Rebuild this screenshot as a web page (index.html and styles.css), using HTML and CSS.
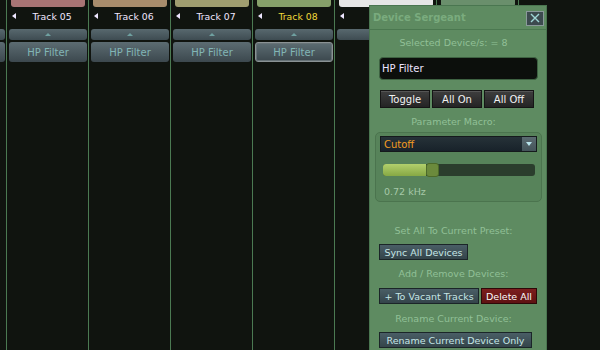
FILE: index.html
```html
<!DOCTYPE html>
<html>
<head>
<meta charset="utf-8">
<link rel="stylesheet" href="styles.css">
</head>
<body>
<div class="mixer">
  <div class="strip">
    <div class="colorbar none"></div>
    <div class="name"><span class="larrow"></span><span class="tname"></span></div>
    <div class="fold"><span class="uarrow"></span></div>
    <div class="dev"></div>
  </div>
  <div class="strip">
    <div class="colorbar c5"></div>
    <div class="name"><span class="larrow"></span><span class="tname">Track 05</span></div>
    <div class="fold"><span class="uarrow"></span></div>
    <div class="dev">HP Filter</div>
  </div>
  <div class="strip">
    <div class="colorbar c6"></div>
    <div class="name"><span class="larrow"></span><span class="tname">Track 06</span></div>
    <div class="fold"><span class="uarrow"></span></div>
    <div class="dev">HP Filter</div>
  </div>
  <div class="strip">
    <div class="colorbar c7"></div>
    <div class="name"><span class="larrow"></span><span class="tname">Track 07</span></div>
    <div class="fold"><span class="uarrow"></span></div>
    <div class="dev">HP Filter</div>
  </div>
  <div class="strip">
    <div class="colorbar c8"></div>
    <div class="name"><span class="larrow"></span><span class="tname sel">Track 08</span></div>
    <div class="fold"><span class="uarrow"></span></div>
    <div class="dev active">HP Filter</div>
  </div>
  <div class="strip wide">
    <div class="colorbar c9"></div>
    <div class="name"><span class="larrow"></span><span class="tname"></span></div>
    <div class="fold"><span class="uarrow"></span></div>
  </div>
  <div class="strip">
    <div class="colorbar c10"></div>
  </div>
</div>

<div class="panel">
  <div class="titlebar">
    <span class="title">Device Sergeant</span>
    <span class="close"><svg width="12" height="12" viewBox="0 0 12 12"><path d="M2 2 L10 10 M10 2 L2 10" stroke="#9fd6d6" stroke-width="1.4" fill="none"/></svg></span>
  </div>
  <div class="body">
    <div class="label l1">Selected Device/s: = 8</div>
    <div class="input">HP Filter</div>
    <div class="btnrow">
      <span class="dbtn">Toggle</span>
      <span class="dbtn">All On</span>
      <span class="dbtn">All Off</span>
    </div>
    <div class="label l2">Parameter Macro:</div>
    <div class="group">
      <div class="dropdown"><span class="dd-text">Cutoff</span><span class="dd-btn"><span class="darrow"></span></span></div>
      <div class="slider"><div class="fill" style="width:43px"></div><div class="knob"></div></div>
      <div class="value">0.72 kHz</div>
    </div>
    <div class="label l3">Set All To Current Preset:</div>
    <span class="bbtn sync">Sync All Devices</span>
    <div class="label l4">Add / Remove Devices:</div>
    <div class="btnrow2">
      <span class="bbtn">+ To Vacant Tracks</span>
      <span class="rbtn">Delete All</span>
    </div>
    <div class="label l5">Rename Current Device:</div>
    <span class="bbtn rename">Rename Current Device Only</span>
  </div>
</div>
</body>
</html>
```

FILE: styles.css
```css
html, body {
  margin: 0;
  padding: 0;
  width: 600px;
  height: 350px;
  overflow: hidden;
  background: #10140f;
  font-family: "DejaVu Sans", sans-serif;
}

.mixer {
  display: flex;
  margin-left: -75px;
  height: 350px;
}

.strip {
  width: 81px;
  flex: none;
  border-right: 1px solid #4b7a52;
  display: flex;
  flex-direction: column;
}
.strip.wide { width: 101px; }

.colorbar {
  height: 7px;
  margin: 0 3px 0 4px;
  border-radius: 0 0 3px 3px;
}
.colorbar.none { background: transparent; }
.c5 { background: #a87474; }
.c6 { background: #a88c6c; }
.c7 { background: #a09e70; }
.c8 { background: #86a06a; }
.c9 { background: #e6e6e6; }
.c10 { background: #6a8f6c; }

.name {
  height: 18px;
  display: flex;
  align-items: center;
}
.larrow {
  width: 0;
  height: 0;
  margin-left: 5px;
  border-top: 3.5px solid transparent;
  border-bottom: 3.5px solid transparent;
  border-right: 4px solid #eee6ff;
}
.tname {
  flex: 1;
  text-align: center;
  font-size: 9.3px;
  color: #f0e8ff;
  padding-top: 1px;
}
.tname.sel { color: #f2da3a; }

.fold {
  height: 11px;
  margin: 4px 1px 0 2px;
  border-radius: 3px;
  background: linear-gradient(#58686e, #3e4c52);
  display: flex;
  justify-content: center;
  align-items: center;
}
.uarrow {
  width: 0;
  height: 0;
  border-left: 3px solid transparent;
  border-right: 3px solid transparent;
  border-bottom: 3px solid #6fa0a0;
}

.dev {
  height: 20px;
  margin: 2px 1px 0 2px;
  border-radius: 3px;
  background: linear-gradient(#5c6c72, #3c484e);
  color: #82b6b6;
  font-size: 10px;
  display: flex;
  align-items: center;
  justify-content: center;
  box-sizing: border-box;
}
.dev.active {
  border: 1px solid #8a9294;
  box-shadow: inset 0 0 0 1px #667276;
}

/* floating panel */
.panel {
  position: absolute;
  left: 369px;
  top: 5px;
  width: 178px;
  height: 360px;
  box-sizing: border-box;
  background: #5e8b61;
  border: 1px solid #4a7650;
}

.titlebar {
  height: 23px;
  display: flex;
  align-items: center;
  justify-content: space-between;
  border-bottom: 1px solid #4b7850;
}
.title {
  margin-left: 3px;
  font-size: 10px;
  font-weight: bold;
  color: #7aab7e;
}
.close {
  width: 18px;
  height: 15px;
  margin-right: 2px;
  margin-top: 1px;
  box-sizing: border-box;
  background: #3c4a4e;
  border: 1px solid #8a9a9a;
  display: flex;
  align-items: center;
  justify-content: center;
}

.body {
  display: flex;
  flex-direction: column;
  align-items: flex-start;
  padding: 6px 0 0 9px;
}

.label {
  align-self: stretch;
  margin-right: 18px;
  text-align: center;
  font-size: 9.5px;
  line-height: 14px;
  height: 14px;
  color: #91c097;
}
.l2 { margin-top: 7px; }
.l3 { margin-top: 22px; }
.l4 { margin-top: 7px; }
.l5 { margin-top: 8px; }

.input {
  margin-top: 7px;
  width: 159px;
  height: 23px;
  box-sizing: border-box;
  background: #0c0f0c;
  border: 1px solid #3e6242;
  border-radius: 4px;
  color: #ece4ff;
  font-size: 10px;
  display: flex;
  align-items: center;
  padding-left: 2px;
}

.btnrow {
  margin-top: 10px;
  display: flex;
  gap: 2px;
  margin-left: 1px;
}
.dbtn {
  width: 50px;
  height: 18px;
  box-sizing: border-box;
  background: linear-gradient(#3e3e3e, #242424);
  border: 1px solid #151515;
  box-shadow: inset 0 1px 0 #555;
  color: #f2f2f2;
  font-size: 10px;
  display: flex;
  align-items: center;
  justify-content: center;
}

.group {
  margin-top: 3px;
  margin-left: -4px;
  width: 167px;
  height: 70px;
  box-sizing: border-box;
  background: #57835a;
  border: 1px solid #4b744e;
  border-radius: 5px;
  padding: 3px 4px 0 4px;
}
.dropdown {
  height: 16px;
  box-sizing: border-box;
  background: linear-gradient(#263238, #18222a);
  border: 1px solid #151a1c;
  display: flex;
  align-items: center;
  justify-content: space-between;
}
.dd-text {
  color: #f29c22;
  font-size: 10px;
  margin-left: 3px;
}
.dd-btn {
  width: 14px;
  height: 14px;
  background: linear-gradient(#5a6a70, #44545a);
  display: flex;
  align-items: center;
  justify-content: center;
}
.darrow {
  width: 0;
  height: 0;
  border-left: 3.5px solid transparent;
  border-right: 3.5px solid transparent;
  border-top: 4px solid #b8e4ec;
}

.slider {
  margin: 12px 2px 0 3px;
  height: 12px;
  border-radius: 3px;
  background: #2b3d2d;
  display: flex;
  align-items: center;
}
.fill {
  height: 12px;
  border-radius: 3px 0 0 3px;
  background: linear-gradient(#b2d06c, #86a844);
}
.knob {
  width: 13px;
  height: 14px;
  box-sizing: border-box;
  background: #6b8a3c;
  border: 1px solid #4c6a2a;
  border-radius: 3px;
}
.value {
  margin-top: 9px;
  margin-left: 4px;
  font-size: 9.5px;
  line-height: 13px;
  color: #a6c8a8;
}

.bbtn, .rbtn {
  height: 16px;
  box-sizing: border-box;
  padding: 0 5px;
  background: linear-gradient(#4a5e66, #34444a);
  border: 1px solid #1b2528;
  color: #c6e6e6;
  font-size: 9.5px;
  display: flex;
  align-items: center;
  justify-content: center;
  white-space: nowrap;
}
.sync { margin-top: 6px; width: 89px; }
.btnrow2 {
  margin-top: 7px;
  display: flex;
  gap: 2px;
}
.btnrow2 .bbtn { width: 100px; }
.rbtn {
  width: 56px;
  background: linear-gradient(#7c1e1e, #5e1212);
  border-color: #2e0808;
  color: #fafafa;
}
.rename { margin-top: 6px; width: 153px; }
```
